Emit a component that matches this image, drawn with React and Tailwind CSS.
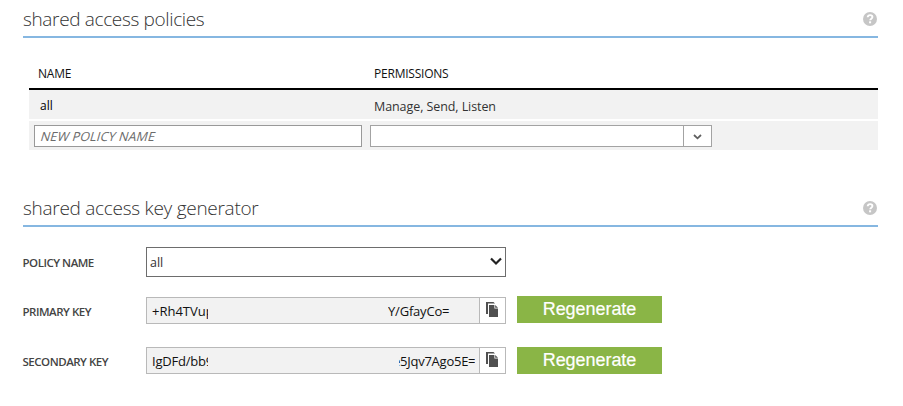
import React from "react";

function HelpIcon() {
  return (
    <svg width="14" height="14" viewBox="0 0 14 14" className="mt-[1px] mr-[1px] shrink-0">
      <circle cx="7" cy="7" r="7" fill="#c6c6c6" />
      <path d="M4.7 5.2C4.8 3.8 5.8 3.1 7.1 3.1c1.4 0 2.3.7 2.3 1.9 0 1.7-2.2 1.6-2.2 3.3" fill="none" stroke="#fff" strokeWidth="1.9" />
      <rect x="6.1" y="9.3" width="2" height="2" fill="#fff" />
    </svg>
  );
}

function CopyIcon() {
  return (
    <svg width="12" height="15" viewBox="0 0 12 15" className="-mt-[2px] mr-[1px]">
      <path d="M0 0h7.5L9 1.5H2V12H0z" fill="#505050" />
      <path d="M3 3h5.4v3.6H12V15H3z" fill="#505050" />
      <path d="M9.2 3L12 5.8H9.2z" fill="#505050" />
    </svg>
  );
}

function SectionHeader({ children, tracking }) {
  return (
    <div className="flex h-[38px] w-[855px] items-center justify-between border-b-2 border-[#86b7e1]">
      <h2 className={`pt-[2px] text-[19px] leading-[36px] font-light whitespace-nowrap text-[#333] ${tracking}`}>{children}</h2>
      <HelpIcon />
    </div>
  );
}

function Label({ children, className }) {
  return <div className={`-ml-[0.5px] w-[123.5px] text-[11.5px] leading-none font-semibold whitespace-nowrap text-[#444] ${className}`}>{children}</div>;
}

function KeyRow({ label, left, right }) {
  return (
    <div className="flex h-[27px] items-center">
      <Label className="pt-[3px] tracking-[-0.48px]">{label}</Label>
      <div className="flex h-[27px] w-[360px] border border-[#b9b9b9] bg-[#f2f2f2] text-[13px] leading-[26px] text-[#111]">
        <div className="flex w-[332px]">
          {left}
          {right}
        </div>
        <div className="flex flex-1 items-center justify-center border-l border-[#b9b9b9] bg-white">
          <CopyIcon />
        </div>
      </div>
    </div>
  );
}

function Regenerate() {
  return (
    <button className="h-[27px] w-[145px] bg-[#8ab546] pb-[1px] text-center font-['Liberation_Sans',Arial,sans-serif] text-[18px] leading-[26px] tracking-[-0.05px] text-white [-webkit-text-stroke:0.2px_white]">
      Regenerate
    </button>
  );
}

export default function App() {
  return (
    <div className="h-[406px] w-[903px] overflow-hidden bg-white pl-[23px] font-['Open_Sans','Noto_Sans',sans-serif]">
      <SectionHeader tracking="tracking-[-0.35px]">shared access policies</SectionHeader>

      <div className="ml-[6px] w-[849px] pt-[20px]">
        <div className="flex h-[32px] items-center border-b-2 border-black pt-[2px] pl-[9px] text-[12px] text-[#111]">
          <div className="w-[336px] tracking-[-0.2px]">NAME</div>
          <div className="tracking-[-0.22px]">PERMISSIONS</div>
        </div>
        <div className="flex h-[29px] items-center bg-[#f2f2f2] pl-[11px] text-[12px]">
          <div className="w-[334px] pt-[2px] text-black">all</div>
          <div className="pt-[5px] text-[12.5px] tracking-[-0.08px] text-[#333]">Manage, Send, Listen</div>
        </div>
        <div className="mt-[2px] flex h-[29px] gap-2 bg-[#f2f2f2] pt-[4px] pl-[5px]">
          <div className="h-[22px] w-[328px] border border-[#999] bg-white pl-[6px] text-[12.5px] leading-[21px] tracking-[0.16px] text-[#6b6b6b]">
            <span className="inline-block -skew-x-[16deg]">NEW POLICY NAME</span>
          </div>
          <div className="flex h-[22px] w-[342px] border border-[#a3a3a3] bg-white">
            <div className="w-[312px]" />
            <div className="flex flex-1 items-center justify-center border-l border-[#a3a3a3]">
              <svg width="9" height="6" viewBox="0 0 9 6" className="mt-[2px]">
                <path d="M1 1l3.5 3.3L8 1" fill="none" stroke="#606060" strokeWidth="1.8" />
              </svg>
            </div>
          </div>
        </div>
      </div>

      <div className="mt-[39px]">
        <SectionHeader tracking="tracking-[-0.28px]">shared access key generator</SectionHeader>
      </div>

      <div className="mt-[20px] flex h-[30px] items-center">
        <Label className="pt-[2px] tracking-[-0.48px]">POLICY NAME</Label>
        <div className="flex h-[30px] w-[360px] items-center justify-between border border-[#6d6d6d] bg-white pr-[3px] pl-[3px] text-[12.5px] text-[#333]">
          <span className="pt-[2px]">all</span>
          <svg width="12" height="9" viewBox="0 0 12 9" className="-mt-[1px]">
            <path d="M1 1.5l5 5 5-5" fill="none" stroke="#222" strokeWidth="2.2" />
          </svg>
        </div>
      </div>

      <div className="flex gap-[11px]">
        <div className="flex flex-col gap-[23px] pt-[20px]">
          <KeyRow
            label="PRIMARY KEY"
            left={<div className="ml-[5px] w-[56px] overflow-hidden whitespace-nowrap">+Rh4TVup</div>}
            right={<div className="ml-[180px] w-[70px] overflow-hidden whitespace-nowrap tracking-[-0.2px]">Y/GfayCo=</div>}
          />
          <KeyRow
            label="SECONDARY KEY"
            left={<div className="ml-[5px] w-[56px] overflow-hidden tracking-[-0.2px] whitespace-nowrap">IgDFd/bb9</div>}
            right={
              <div className="ml-[191px] flex w-[76px] overflow-hidden whitespace-nowrap tracking-[-0.25px]">
                <span className="-ml-[6px]">e5Jqv7Ago5E=</span>
              </div>
            }
          />
        </div>
        <div className="flex flex-col gap-[24px] pt-[19px]">
          <Regenerate />
          <Regenerate />
        </div>
      </div>
    </div>
  );
}
